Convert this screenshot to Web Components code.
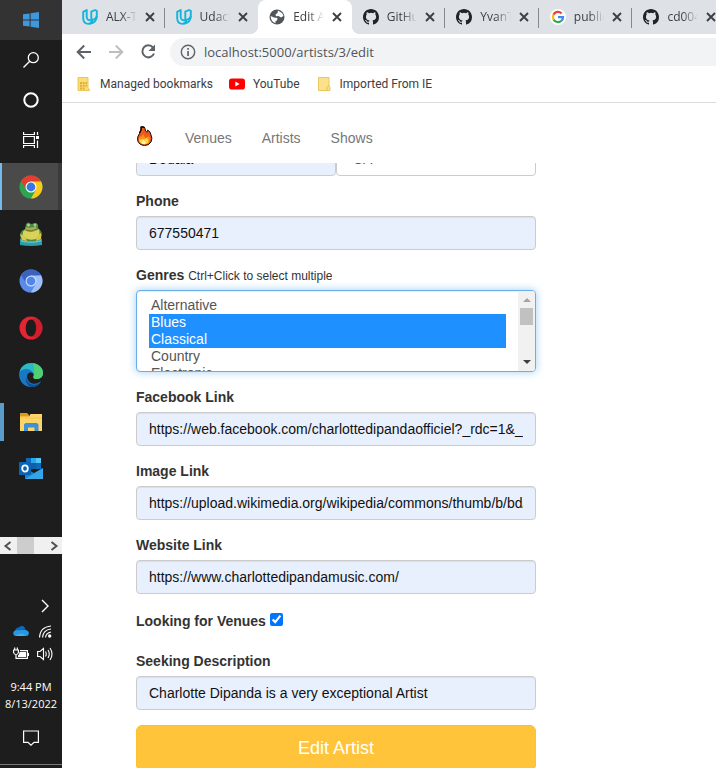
<!DOCTYPE html>
<html lang="en">
<head>
<meta charset="utf-8">
<title>Edit Artist</title>
<style>
  html, body { margin: 0; height: 100%; background: #fff; overflow: hidden; }
  body { font: 14px/20px "Liberation Sans", Arial, sans-serif; color: #333; }
</style>
</head>
<body>
<desktop-view></desktop-view>
<script>
const ICONS = {
  windows: [16, `<path fill="#3f97dc" d="M0 2.3 6.6 1.4V7.500H0zM7.600 1.200 16 0V7.500H7.600zM0 8.500H6.600V14.600L0 13.700zM7.600 8.500H16V16L7.600 14.800z"/>`],
  search: [16, `<g fill="none" stroke="#fff" stroke-width="1.300"><circle cx="10.300" cy="5.700" r="5"/><path d="M6.700 9.300.5 15.500"/></g>`],
  cortana: [16, `<circle cx="8" cy="8" r="6.700" fill="none" stroke="#fff" stroke-width="2"/>`],
  taskview: [16, `<g fill="none" stroke="#fff" stroke-width="1.200"><path d="M.6 0V2.500H11.400V0M.6 16V13.500H11.400V16M.6 4.500h10.800v7H.6zM14.500 0v3M14.500 8.500V16"/></g><path fill="#fff" d="M13 4h3v3h-3z"/>`],
  chrome: [24, `<circle cx="12" cy="12" r="11.500" fill="#2fa44f"/><path fill="#e33e2f" d="M2 6.300A11.500 11.500 0 0 1 22 6.300L17 7H12L7.500 14.800z"/><path fill="#fbc91d" d="M12 6.500H22.100A11.500 11.500 0 0 1 12 23.500L17 14.500z"/><circle cx="12" cy="12" r="5.500" fill="#fff"/><circle cx="12" cy="12" r="4.400" fill="#3a76e0"/>`],
  chromium: [24, `<circle cx="12" cy="12" r="11.500" fill="#5a8bea"/><path fill="#3963bf" d="M2 6.300A11.500 11.500 0 0 1 22 6.300L17 7H12L7.500 14.800z"/><path fill="#a0bff8" d="M12 6.500H22.100A11.500 11.500 0 0 1 12 23.500L17 14.500z"/><circle cx="12" cy="12" r="5.500" fill="#c7dafc"/><circle cx="12" cy="12" r="4.300" fill="#4f86e8"/>`],
  frog: [24, `<path fill="#2d9cab" d="M1 17 4 15H20L23 17V23Q12 25 1 23z"/><path fill="#6dc7d0" d="M2 18Q12 21 22 18V19.500Q12 22 2 19.500z"/><path fill="#4c8a46" d="M2 17Q-1 10 6 7L7 2Q9-1 12 2L17 1Q20 2 19 6 25 11 22 16 18 20 12 19 5 20 2 17z"/><path fill="#d8d45b" d="M5 8Q12 12 20 7 22 14 17 17 11 19 6 16 2 13 5 8z"/><path fill="#93b84e" d="M7 5Q12 7 17 4L18 8Q12 11 6 8z"/><circle cx="9.500" cy="3" r="1.500" fill="#b9c98a"/><circle cx="16" cy="3" r="1.400" fill="#b9c98a"/><path fill="none" stroke="#8d5d25" d="M7 8Q12 10.500 18 7"/><path fill="#dcc743" d="M1 12l5 2 2 5-5-1zM22 11l-4 3-1 5 5-2z"/>`],
  opera: [24, `<path fill="#e62532" fill-rule="evenodd" d="M12 .5a11.500 11.500 0 0 1 0 23 11.500 11.500 0 0 1 0-23zM12 3.500C5 3.500 5 20.500 12 20.500S19 3.500 12 3.500z"/><path fill="#a91522" d="M12 20.500Q17 20 17 12 17 4 12 3.500 16 .8 19.700 3.600 23.500 7 23.500 12T19.700 20.400Q16 23 12 20.500z" opacity=".4"/>`],
  edge: [24, `<path fill="#1779c5" d="M0 11C1 4 7 0 12 0 19 0 24 4.500 24 10 24 14 21 16.300 17 16 14.500 15.800 14 14.500 14.500 13.500 16 11 13.500 9 11 9.500 7 10.500 7 16 11 19.500 15 22 19 20.500 22 18 19.500 23 15.500 24.300 12 24 5 24 0 18 0 11z"/><path fill="#2bb8c9" d="M.5 9C2 3 7 0 12 0 19 0 24 4.500 24 10 24 14 21 16.300 17 16 14.500 15.800 14 14.500 14.500 13.500 16 10 12 6.500 8 6 5 5.800 2 7 .5 9z"/><path fill="#57d45f" d="M14 .2C20 1 24 5 24 10 24 14 21 16.300 17 16 14.500 15.800 14 14.500 14.500 13.500 16 10 15 4 14 .2z" opacity=".85"/><path fill="#124f92" d="M7.500 12C6 16 9.500 21.500 15 21.800 18 21.800 20 20.500 22 18 19.500 23 15.500 24.300 12 24 8 22.500 5.500 17 7.500 12z"/>`],
  explorer: [24, `<path fill="#dc9b16" d="M1 3H8L10 5V8H1z"/><path fill="#fbd569" d="M1 6.500H10L11.500 4H23V21H1z"/><path fill="#f5c344" d="M1 7H23V9H1z" opacity=".5"/><path fill="#3d92d4" d="M5 21V14.500L6.500 13H18L19.500 14.500V21H15.500V17.500H9V21z"/>`],
  outlook: [24, `<path fill="#1069b8" d="M7 1H22V12H7z"/><path fill="#28a8ea" d="M12 1H22V6H12z"/><path fill="#55c5f5" d="M17 1h5v5h-5z"/><path fill="#0f5fa8" d="M12 6h5v6h-5z"/><path fill="#1383d4" d="M6 11 15 16 24 11V22H6z"/><path fill="#4fbdf1" d="M6 22 24 11V22z" opacity=".6"/><path fill="#0a64b4" d="M0 5H12V18H0z"/><ellipse cx="6" cy="11.500" rx="2.800" ry="3.200" fill="none" stroke="#fff" stroke-width="1.800"/>`],
  chevron: [16, `<path d="M5 2 11 8 5 14" fill="none" stroke="#fff" stroke-width="1.400"/>`],
  cloud: [16, `<path fill="#0c69ba" d="M2 10Q1.500 5 5.500 4.500 7 2.500 10 3 12 4 12.500 7L14 9z"/><path fill="#2699e2" d="M2.500 13Q0 12.500.2 10 .8 7 4 7.200 9 7 11.500 7 16 7 15.900 10.500 15.500 13 13 13z"/><path fill="#45adea" d="M2.500 13Q8 8 13 13z"/>`],
  wifi: [16, `<g fill="none" stroke="#fff" stroke-width="1.100"><path d="M2.500 14.500Q3 4 14 3M5.500 14.500Q6 7 14 6M8.500 14.500Q9 10 14 9"/></g><circle cx="12.700" cy="13" r="1.700" fill="#fff"/>`],
  battery: [16, `<g fill="none" stroke="#fff" stroke-width="1.200"><path d="M.6 4h4.800v2.500Q5 8.500 3 8.500 1 8.500.6 6.500zM1.700 4V1.500M4.300 4V1.500M3 8.500V12.400H14.400V4.600H7"/></g><path fill="#fff" d="M6.500 6H13V11H5V9.500Q6.500 8.500 6.500 6zM15 7h1v3h-1z"/>`],
  speaker: [16, `<g fill="none" stroke="#fff" stroke-width="1.100"><path d="M.6 5.500H3L6.500 2.500V13.500L3 10.500H.6zM8.500 5.500Q10 8 8.500 10.500M11 4Q13.500 8 11 12M13 2Q17 8 13 14"/></g>`],
  notice: [16, `<path d="M.6 1H15.400V12.400H11L8 15.200 5 12.400H.6z" fill="none" stroke="#fff" stroke-width="1.200"/>`],
  left: [12, `<path d="M8.500 2 3.500 6l5 4" fill="none" stroke="#505050" stroke-width="2"/>`],
  right: [12, `<path d="M3.500 2 8.500 6l-5 4" fill="none" stroke="#505050" stroke-width="2"/>`],
  udacity: [16, `<g fill="none" stroke="#14b4dc" stroke-width="1.900" stroke-linejoin="round"><path d="M4.700 1 1.200 2.800V9.500Q1.500 14.800 6.500 14.900 10.300 14.500 10.300 10.800Q5 12.500 4.700 8z"/><path d="M13 1 9.300 2.600V8.800Q9.300 11 10.300 10.900 14.800 10 14.800 6V1.800z"/><path d="M7.500 14.800Q14.800 13.500 14.900 7"/></g>`],
  globe: [16, `<circle cx="8" cy="8" r="7.500" fill="#50555a"/><path fill="#fff" d="M9 1.500 13 4Q14.500 6 14.400 7L12 8.500 9.500 7 7 7.300 6.500 5.500 8.500 4zM1.600 7 5 8.500 8.500 9 8 11.500 6.500 12V14.200Q2 13 1.600 7z"/>`],
  github: [16, `<path fill="#1f242a" d="M8 0C3.580 0 0 3.580 0 8c0 3.540 2.290 6.530 5.470 7.590.4.070.55-.17.55-.38 0-.19-.01-.82-.01-1.490-2.010.37-2.530-.49-2.690-.94-.09-.23-.48-.94-.82-1.130-.28-.15-.68-.52-.01-.53.63-.01 1.080.58 1.230.82.720 1.210 1.870.87 2.330.66.070-.52.280-.87.510-1.070-1.780-.2-3.640-.89-3.640-3.950 0-.87.310-1.590.820-2.150-.08-.2-.36-1.020.08-2.120 0 0 .67-.21 2.200.82a7.600 7.600 0 0 1 4 0c1.530-1.040 2.200-.82 2.200-.82.440 1.100.160 1.920.080 2.120.510.560.820 1.270.820 2.150 0 3.070-1.870 3.750-3.650 3.950.290.250.540.730.540 1.480 0 1.070-.01 1.930-.01 2.200 0 .21.150.460.550.380A8.010 8.010 0 0 0 16 8c0-4.420-3.580-8-8-8z"/>`],
  google: [16, `<circle cx="8" cy="8" r="8" fill="#fff"/><g fill="none" stroke-width="2.200"><path stroke="#ea4335" d="M3.400 5.700A5.100 5.100 0 0 1 11.600 4.400"/><path stroke="#fbbc05" d="M3.500 10.400A5.100 5.100 0 0 1 3.400 5.700"/><path stroke="#34a853" d="M11.400 11.800A5.100 5.100 0 0 1 3.500 10.400"/><path stroke="#4285f4" d="M8 8.200H13Q13 10.500 11.400 11.800"/></g>`],
  close: [10, `<path d="M1 1l8 8M9 1l-8 8" stroke="#3c4043" stroke-width="1.900"/>`],
  back: [16, `<path d="M15 8H2M8.200 1.500 1.700 8l6.500 6.500" fill="none" stroke="#5f6368" stroke-width="2"/>`],
  forward: [16, `<path d="M1 8H14M7.800 1.500 14.300 8l-6.500 6.500" fill="none" stroke="#bcbec1" stroke-width="2"/>`],
  reload: [16, `<path d="M13 3.500A6 6 0 1 0 14 9.500" fill="none" stroke="#5f6368" stroke-width="2"/><path fill="#5f6368" d="M15 .5V7H8.500z"/>`],
  info: [16, `<circle cx="8" cy="8" r="6.700" fill="none" stroke="#5f6368" stroke-width="1.400"/><path fill="#5f6368" d="M7.200 7h1.700v5H7.200zM7.200 4h1.700v1.700H7.200z"/>`],
  managed: [16, `<path fill="#fcdc75" stroke="#e5bd45" stroke-width=".8" d="M2 1.500H12V12L13.500 13.500V14.500H2z"/><path fill="#dfb03a" d="M4 6h2v2H4zM6.700 6h2v2h-2zM9.400 6h1.500v2H9.400zM4 8.700h2v2H4zM6.700 8.700h2v2h-2zM9.400 8.700h1.500v2H9.400zM4 11.400h2v2H4zM6.700 11.400h2v2h-2z"/>`],
  youtube: [16, `<rect y="2.500" width="16" height="11" rx="2.800" fill="#f00"/><path fill="#fff" d="M6.300 5.500 10.600 8l-4.300 2.500z"/>`],
  folder: [16, `<path fill="#fde08a" stroke="#e5bd45" stroke-width=".8" d="M2.500 1.500H13V10L14 11.500V14.500H2.500z"/><path fill="none" stroke="#e5bd45" d="M11 14V11.500L13 9.500"/>`],
  fire: [20, `<path fill="#ec5a1c" stroke="#160b06" stroke-width="1" d="M6.200.8Q9.500.3 10 2.500 10.300 5.500 12 6.300 12.800 6 12.700 4 15.500 5.500 16 9 17.800 12.500 16 16 14 19.500 9.500 19.500 4 19 2.700 14.800 1.800 11 4.500 7.500 6.500 4.500 6.200.8z"/><path fill="none" stroke="#160b06" stroke-width="1.400" d="M4.300 7Q6.800 4 6 1.200 8 .5 9.800 1.800"/><path fill="#fa8f1f" d="M5 10Q6.500 12 8 8L10.500 12Q13 11 14 10 16 14 13.500 17 9.500 19.300 5 16.500 3 13 5 10z"/><path fill="#ffd83b" d="M4.300 12.500Q6 15 7.500 12.500 9 14 10 13L12 12Q14.500 15.500 12.500 17.300 9 19.300 5.500 17 3.800 15.500 4.300 12.500z"/><path fill="#fff3a5" d="M6.500 16 8.500 13.800 10.800 16 10 18H7.500z"/>`],
  tri: [8, `<path fill="currentColor" d="M0 6 4 2 8 6z"/>`]
};

const define = (name, html, setup) => {
  const template = document.createElement('template');
  template.innerHTML = html;
  customElements.define(name, class extends HTMLElement {
    constructor() {
      super();
      this.attachShadow({ mode: 'open' }).append(template.content.cloneNode(true));
    }
    connectedCallback() { if (setup) setup(this, this.shadowRoot); }
  });
};

define('ui-icon', `<style>:host{display:inline-block;flex:none;line-height:0}svg{display:block}</style><span></span>`, (host, root) => {
  const [box, body] = ICONS[host.getAttribute('name')];
  const size = host.getAttribute('size') || box;
  root.querySelector('span').innerHTML = `<svg width="${size}" height="${size}" viewBox="0 0 ${box} ${box}" aria-hidden="true">${body}</svg>`;
});

define('task-button', `<style>
  :host{display:block;height:47px}
  :host([kind=system]){height:40px}
  :host([start]){background:#333}
  :host([active]) button{background:linear-gradient(90deg,#4a4a4a 56px,#3a3a3a 56px);border-left:2px solid #76b9ed;padding-right:2px}
  :host([running]) button{background:linear-gradient(#5c9ccc,#5c9ccc) left center/4px 38px no-repeat}
  button{box-sizing:border-box;width:100%;height:100%;margin:0;padding:0;border:0;background:none;display:flex;align-items:center;justify-content:center}
</style><button><slot></slot></button>`, (host, root) => root.querySelector('button').setAttribute('aria-label', host.getAttribute('label')));

define('task-bar', `<style>
  :host{display:flex;flex-direction:column;flex:none;width:62px;background:#1d1d1d;color:#fff;font:11px/17px "Open Sans",sans-serif}
  .apps{padding-top:3px}
  .scroll{margin-top:auto;height:17px;background:#f0f0f0;display:flex;align-items:center;gap:3px;padding:0 2px}
  .thumb{width:17px;height:17px;background:#cdcdcd}
  .scroll ui-icon:last-child{margin-left:auto}
  .tray{padding-top:44px;display:grid;grid-template-columns:16px 16px;justify-content:center;gap:8px;row-gap:7px;padding-left:4px}
  .more{grid-column:2;height:18px}
  .clock{text-align:center;padding:16px 0 0}
  .notice{height:53px;border-bottom:1px solid #777;margin-bottom:3px;display:grid;place-items:center}
  button{border:0;background:none;padding:0;margin:0;display:grid;place-items:start}
</style>
<task-button kind="system" start label="Start"><ui-icon name="windows"></ui-icon></task-button>
<task-button kind="system" label="Search"><ui-icon name="search"></ui-icon></task-button>
<task-button kind="system" label="Cortana"><ui-icon name="cortana"></ui-icon></task-button>
<task-button kind="system" label="Task view"><ui-icon name="taskview"></ui-icon></task-button>
<div class="apps">
<task-button active label="Chrome"><ui-icon name="chrome"></ui-icon></task-button>
<task-button label="Frog"><ui-icon name="frog"></ui-icon></task-button>
<task-button label="Chromium"><ui-icon name="chromium"></ui-icon></task-button>
<task-button label="Opera"><ui-icon name="opera"></ui-icon></task-button>
<task-button label="Edge"><ui-icon name="edge"></ui-icon></task-button>
<task-button running label="File Explorer"><ui-icon name="explorer"></ui-icon></task-button>
<task-button label="Outlook"><ui-icon name="outlook"></ui-icon></task-button>
</div>
<div class="scroll"><ui-icon name="left"></ui-icon><div class="thumb"></div><ui-icon name="right"></ui-icon></div>
<div class="tray"><button class="more" aria-label="Hidden icons"><ui-icon name="chevron"></ui-icon></button>
<ui-icon name="cloud"></ui-icon><ui-icon name="wifi"></ui-icon><ui-icon name="battery"></ui-icon><ui-icon name="speaker"></ui-icon></div>
<div class="clock">9:44 PM<br>8/13/2022</div>
<button class="notice" aria-label="Notifications"><ui-icon name="notice"></ui-icon></button>`);

define('browser-tab', `<style>
  :host{display:flex;align-items:center;position:relative;min-width:0;height:34px;padding:0 10px 0 11px;box-sizing:border-box;gap:8px}
  :host([line])::after{content:"";position:absolute;right:0;top:8px;height:20px;width:1px;background:#85888c}
  :host([active]){background:#fff;border-radius:8px 8px 0 0}
  :host([active])::before,:host([active])::after{content:"";position:absolute;bottom:0;width:8px;height:8px}
  :host([active])::before{left:-8px;background:radial-gradient(circle at 0 0,transparent 8px,#fff 8px)}
  :host([active])::after{right:-8px;background:radial-gradient(circle at 100% 0,transparent 8px,#fff 8px)}
  .title{flex:1;min-width:0;overflow:hidden;white-space:nowrap;-webkit-mask-image:linear-gradient(90deg,#000 50%,transparent)}
  button{border:0;background:none;padding:0;margin:0;display:flex}
</style><slot name="icon"></slot><span class="title"><slot></slot></span><button aria-label="Close tab"><ui-icon name="close"></ui-icon></button>`);

define('browser-chrome', `<style>
  :host{display:block;flex:none;font:12px/18px "Open Sans",sans-serif;color:#3c4043;border-bottom:1px solid #dadce0;overflow:hidden}
  .tabs{background:#dee1e6;padding-left:9px;margin-right:-10px;display:grid;grid-template-columns:repeat(7,minmax(0,1fr))}
  .bar{display:flex;align-items:center;gap:16px;padding:4px 0 2px 14px}
  button{border:0;background:none;padding:0;margin:0;display:flex}
  .url{flex:1;min-width:0;height:28px;border-radius:14px 0 0 14px;background:#f1f3f4;display:flex;align-items:center;gap:8px;padding-left:10px;margin-left:-2px}
  input{flex:1;min-width:0;border:0;background:none;padding:0;font:13px/20px "Open Sans",sans-serif;color:#50555a;outline:0}
  nav{display:flex;align-items:center;height:32px;padding:0 0 2px 14px;gap:16px;font-family:Roboto,sans-serif}
  a{color:inherit;text-decoration:none;display:flex;align-items:center;gap:8px}
</style>
<div class="tabs">
<browser-tab line><ui-icon slot="icon" name="udacity"></ui-icon>ALX-T</browser-tab>
<browser-tab><ui-icon slot="icon" name="udacity"></ui-icon>Udacity</browser-tab>
<browser-tab active><ui-icon slot="icon" name="globe"></ui-icon>Edit Artist</browser-tab>
<browser-tab line><ui-icon slot="icon" name="github"></ui-icon>GitHub</browser-tab>
<browser-tab line><ui-icon slot="icon" name="github"></ui-icon>YvanT</browser-tab>
<browser-tab line><ui-icon slot="icon" name="google"></ui-icon>public</browser-tab>
<browser-tab><ui-icon slot="icon" name="github"></ui-icon>cd004</browser-tab>
</div>
<div class="bar">
<button aria-label="Back"><ui-icon name="back"></ui-icon></button>
<button aria-label="Forward"><ui-icon name="forward"></ui-icon></button>
<button aria-label="Reload"><ui-icon name="reload"></ui-icon></button>
<div class="url"><ui-icon name="info"></ui-icon><input aria-label="Address" value="localhost:5000/artists/3/edit"></div>
</div>
<nav><a href="#m"><ui-icon name="managed"></ui-icon>Managed bookmarks</a><a href="#y"><ui-icon name="youtube"></ui-icon>YouTube</a><a href="#i"><ui-icon name="folder"></ui-icon>Imported From IE</a></nav>`);

define('site-nav', `<style>
  :host{display:flex;align-items:center;gap:30px;height:60px;padding:10px 0 0 73px;box-sizing:border-box;flex:none}
  a{color:#777;text-decoration:none}
  a:first-child{line-height:0}
</style><a href="#home" aria-label="Home"><ui-icon name="fire"></ui-icon></a><a href="#venues">Venues</a><a href="#artists">Artists</a><a href="#shows">Shows</a>`);

const CONTROL = `
  .control{box-sizing:border-box;display:block;width:100%;height:34px;margin:0;padding:6px 12px;border:1px solid #ccc;border-radius:4px;background:#e8f0fe;color:#111;font:14px/20px "Liberation Sans",Arial,sans-serif;box-shadow:inset 0 1px 1px rgba(0,0,0,.075)}
  label{display:block;height:20px;font-weight:700;margin-bottom:5px}`;

define('text-field', `<style>:host{display:block}${CONTROL}</style><label for="f"></label><input id="f" class="control">`, (host, root) => {
  root.querySelector('label').textContent = host.getAttribute('label');
  root.querySelector('input').value = host.getAttribute('value');
});

define('city-row', `<style>${CONTROL}
  :host{display:grid;grid-template-columns:1fr 1fr;align-items:end;align-content:end;height:14px;margin-top:-1px;overflow:hidden}
  select.control{appearance:none;background:#fff;color:#555;padding-left:16px}
</style><input class="control" aria-label="City" value="Douala"><select class="control" aria-label="State"><option>CA</option></select>`);

define('genre-list', `<style>${CONTROL}
  :host{display:block}
  small{font-weight:400;font-size:12px}
  .box{position:relative}
  select.control{height:82px;background:#fff;color:#555;border-color:#66afe9;box-shadow:inset 0 1px 1px rgba(0,0,0,.075),0 0 8px rgba(102,175,233,.6);padding-right:29px;outline:0;overflow-y:auto;scrollbar-width:none}
  option{min-height:17px;line-height:17px;padding:0 2px;box-sizing:border-box}
  option:checked{background:#1e90ff linear-gradient(#1e90ff,#1e90ff);color:#fff;-webkit-text-fill-color:#fff}
  .rail{position:absolute;top:1px;right:1px;bottom:1px;width:17px;background:#f1f1f1;border-radius:0 3px 3px 0;display:flex;flex-direction:column;align-items:center}
  .rail i{width:13px;height:17px;background:#c1c1c1}
  .rail span{height:17px;display:grid;place-items:center;color:#a3a3a3}
  .rail span:last-child{margin-top:auto;color:#404040;transform:rotate(180deg)}
</style><label for="g">Genres <small>Ctrl+Click to select multiple</small></label>
<div class="box"><select id="g" class="control" multiple><option>Alternative</option><option selected>Blues</option><option selected>Classical</option><option>Country</option><option>Electronic</option><option>Folk</option><option>Funk</option><option>Hip-Hop</option></select>
<div class="rail" aria-hidden="true"><span><ui-icon name="tri"></ui-icon></span><i></i><span><ui-icon name="tri"></ui-icon></span></div></div>`);

define('artist-form', `<style>
  :host{display:block;flex:1;min-height:0;overflow:hidden;padding:2px 12px 0 74px}
  form{display:flex;flex-direction:column;gap:15px;max-width:400px}
  .check{height:27px;display:flex;align-items:flex-start;gap:4px;font-weight:700}
  .check label{line-height:24px}
  .check input{width:13px;height:13px;margin:4px 0 0;accent-color:#0075ff}
  button{height:46px;border:1px solid #fdc12f;border-radius:6px;background:#ffc439;color:#fff;font:18px/24px "Liberation Sans",Arial,sans-serif}
</style><form>
<city-row></city-row>
<text-field label="Phone" value="677550471"></text-field>
<genre-list></genre-list>
<text-field label="Facebook Link" value="https://web.facebook.com/charlottedipandaofficiel?_rdc=1&amp;_rdr"></text-field>
<text-field label="Image Link" value="https://upload.wikimedia.org/wikipedia/commons/thumb/b/bd/Charlotte"></text-field>
<text-field label="Website Link" value="https://www.charlottedipandamusic.com/"></text-field>
<div class="check"><label for="seek">Looking for Venues</label><input id="seek" type="checkbox" checked></div>
<text-field label="Seeking Description" value="Charlotte Dipanda is a very exceptional Artist"></text-field>
<button type="button">Edit Artist</button>
</form>`);

define('desktop-view', `<style>
  :host{display:flex;height:100vh}
  main{flex:1;min-width:0;display:flex;flex-direction:column;background:#fff}
  site-nav{margin-top:2px;height:58px;padding-top:8px}
  artist-form{padding-top:0}
</style><task-bar></task-bar><main><browser-chrome></browser-chrome><site-nav></site-nav><artist-form></artist-form></main>`);
</script>
</body>
</html>
